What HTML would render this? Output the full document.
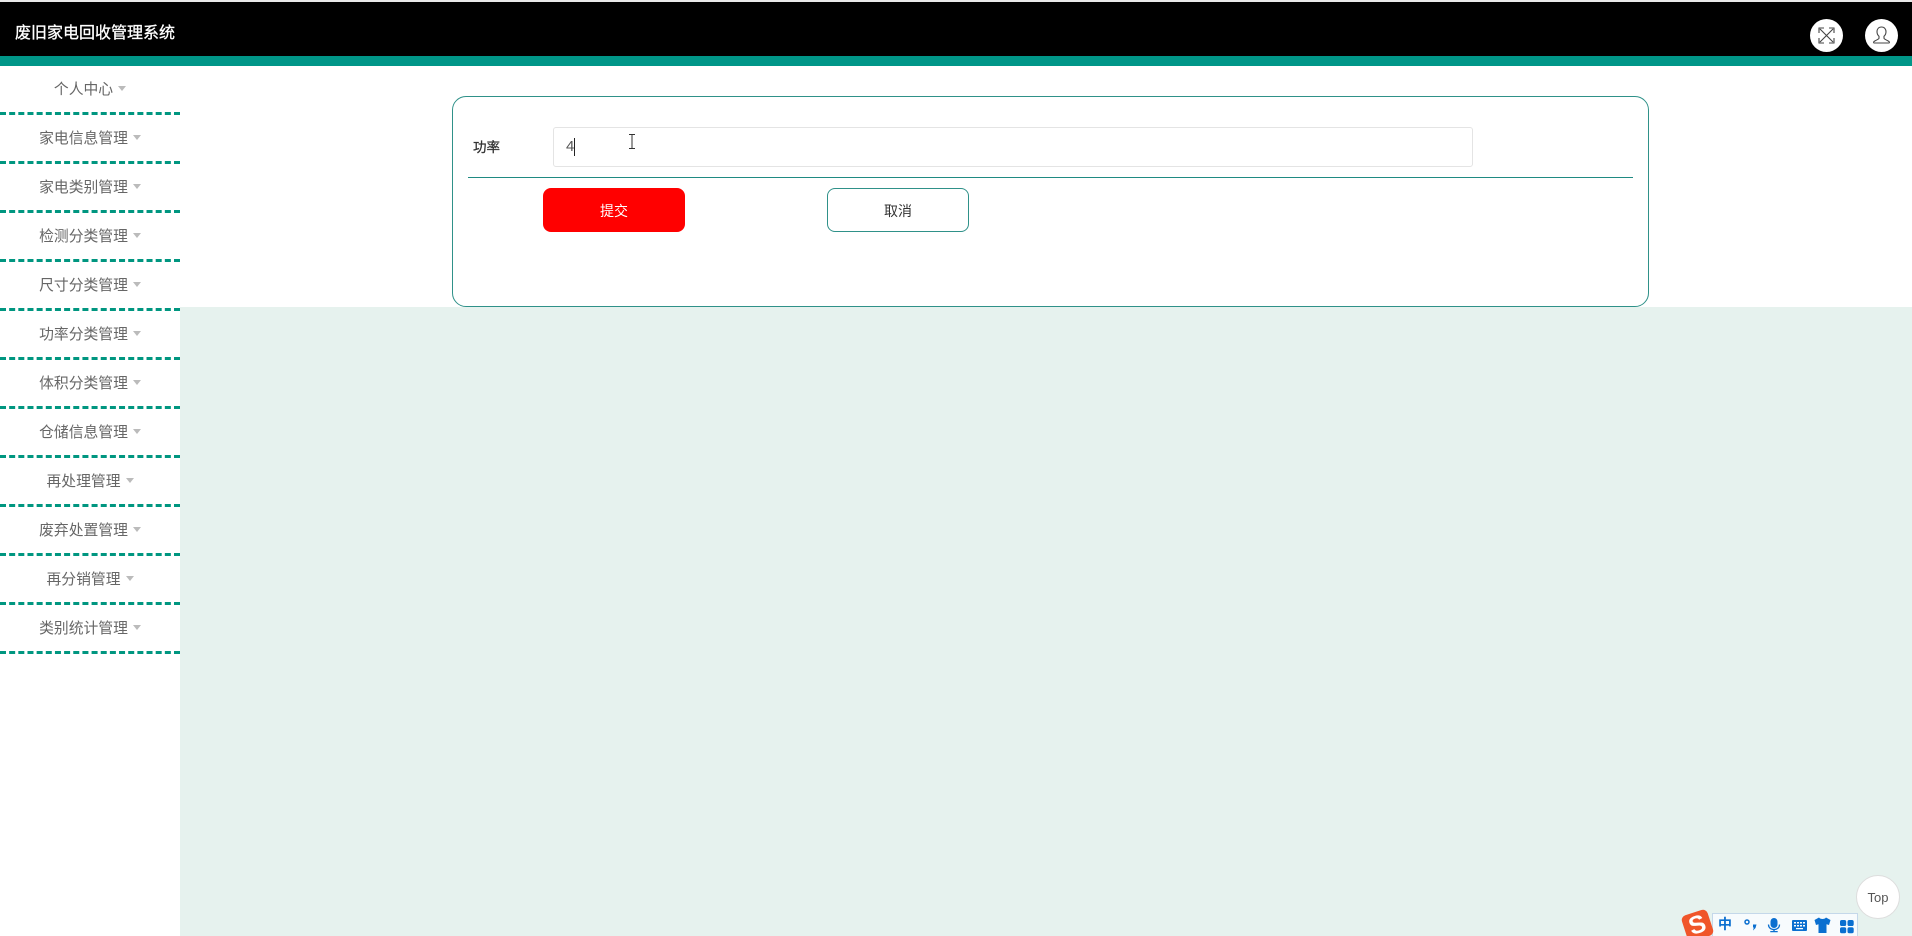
<!DOCTYPE html>
<html lang="zh-CN">
<head>
<meta charset="utf-8">
<title>废旧家电回收管理系统</title>
<style>
*{box-sizing:border-box;margin:0;padding:0}
html,body{width:1912px;height:936px;overflow:hidden;background:#e6f2ee;font-family:"Liberation Sans","Noto Sans CJK SC",sans-serif}
#wrap{position:relative;width:1912px;height:936px;overflow:hidden;background:#e6f2ee}
.a{position:absolute}
#strip{left:0;top:0;width:1912px;height:2px;background:#e8e8e8}
#hdr{left:0;top:2px;width:1912px;height:54px;background:#000}
#teal{left:0;top:56px;width:1912px;height:10px;background:#009688}
#title{left:15px;top:22px;line-height:24px;font-size:16px;color:#fff;white-space:nowrap;-webkit-text-stroke:.3px #fff}
.circ{width:33px;height:33px;border-radius:50%;background:#fff;top:19px}
#side{left:0;top:66px;width:180px;height:870px;background:#fff}
.mi{position:absolute;left:0;width:180px;height:49px;border-bottom:3px dashed #009680;text-align:center;color:#666;font-size:14.8px;line-height:48px;white-space:nowrap}
.mi i{display:inline-block;width:0;height:0;border-left:4.5px solid transparent;border-right:4.5px solid transparent;border-top:5px solid #bbb;margin-left:5px;vertical-align:3px}
#white{left:180px;top:66px;width:1732px;height:241px;background:#fff}
#card{left:452px;top:96px;width:1197px;height:211px;border:1.5px solid #2f9189;border-radius:14px;background:#fff}
#lab{left:473px;top:137px;font-size:13.5px;line-height:22px;color:#333;white-space:nowrap;-webkit-text-stroke:.3px #333}
#inp{left:553px;top:127px;width:920px;height:40px;border:1px solid #e4e4e4;border-radius:3px;background:#fff}
#val{left:566px;top:136px;font-size:15px;line-height:22px;color:#555}
#caret{left:574px;top:138px;width:1px;height:18px;background:#222}
#line{left:468px;top:177px;width:1165px;height:1px;background:#1f8a82}
#ok{left:543px;top:188px;width:142px;height:44px;background:#f00;border-radius:8px;color:#fff;font-size:14px;line-height:46px;text-align:center}
#no{left:827px;top:188px;width:142px;height:44px;background:#fff;border:1px solid #2f9189;border-radius:8px;color:#333;font-size:14px;line-height:44px;text-align:center}
#top{left:1856px;top:875px;width:44px;height:44px;border-radius:50%;background:#fff;border:1px solid #ddd;color:#555;font-size:13px;line-height:43px;text-align:center}
#sg{left:1712px;top:913px;width:146px;height:23px;background:#f7fbfd;border:1px solid #c4d8ea;border-bottom:none}
#logo{left:1684px;top:912px;width:27px;height:27px;background:#f0562a;border-radius:5px;transform:rotate(-18deg);color:#fff;font-size:25px;font-weight:bold;line-height:27px;text-align:center;overflow:hidden}
.sgt{color:#0a6fd0;font-weight:bold;font-size:14px;line-height:20px;white-space:nowrap}
</style>
</head>
<body>
<div id="wrap">
<div class="a" id="strip"></div>
<div class="a" id="hdr"></div>
<div class="a" id="teal"></div>
<div class="a" id="title">废旧家电回收管理系统</div>

<div class="a circ" style="left:1810px">
<svg width="33" height="33" viewBox="0 0 33 33" fill="none" stroke="#444" stroke-width="1.100">
<path d="M10 10L23 23M23 10L10 23"/>
<path d="M9 14V9h5M19 9h5v5M24 19v5h-5M14 24H9v-5"/>
</svg>
</div>
<div class="a circ" style="left:1865px">
<svg width="33" height="33" viewBox="0 0 33 33" fill="none" stroke="#444" stroke-width="1.100">
<path d="M16.500 8c-3 0-4.500 2.200-4.500 4.800 0 2 .8 3.500 2 4.500v2c0 1-3 1.700-5 3.200-.7.600-.5 1.500.4 1.500h14.200c.9 0 1.100-.9.400-1.500-2-1.500-5-2.200-5-3.200v-2c1.200-1 2-2.500 2-4.500C21 10.200 19.500 8 16.500 8z"/>
</svg>
</div>

<div class="a" id="side">
<div class="mi" style="top:0">个人中心<i></i></div>
<div class="mi" style="top:49px">家电信息管理<i></i></div>
<div class="mi" style="top:98px">家电类别管理<i></i></div>
<div class="mi" style="top:147px">检测分类管理<i></i></div>
<div class="mi" style="top:196px">尺寸分类管理<i></i></div>
<div class="mi" style="top:245px">功率分类管理<i></i></div>
<div class="mi" style="top:294px">体积分类管理<i></i></div>
<div class="mi" style="top:343px">仓储信息管理<i></i></div>
<div class="mi" style="top:392px">再处理管理<i></i></div>
<div class="mi" style="top:441px">废弃处置管理<i></i></div>
<div class="mi" style="top:490px">再分销管理<i></i></div>
<div class="mi" style="top:539px">类别统计管理<i></i></div>
</div>

<div class="a" id="white"></div>
<div class="a" id="card"></div>
<div class="a" id="lab">功率</div>
<div class="a" id="inp"></div>
<div class="a" id="val">4</div>
<div class="a" id="caret"></div>
<svg class="a" style="left:625px;top:133px" width="14" height="18" viewBox="0 0 14 18" fill="none" stroke="#333" stroke-width="1">
<path d="M4 1.500h6M7 1.500v14M4 15.500h6"/>
</svg>
<div class="a" id="line"></div>
<div class="a" id="ok">提交</div>
<div class="a" id="no">取消</div>

<div class="a" id="top">Top</div>

<div class="a" id="sg"></div>
<div class="a" id="logo">S</div>
<div class="a sgt" style="left:1718px;top:914px">中</div>
<svg class="a" style="left:1740px;top:915px" width="116" height="21" viewBox="0 0 116 21" fill="#0a6fd0">
<circle cx="7" cy="7" r="2" fill="none" stroke="#0a6fd0" stroke-width="1.500"/>
<path d="M13 9.500h3.500l-1 3.500-2.500 2.500 .8-3H13z"/>
<rect x="30.500" y="3" width="7" height="10" rx="3.500"/>
<path d="M28.500 9.500c0 3.300 2.500 5 5.500 5s5.500-1.700 5.500-5" fill="none" stroke="#0a6fd0" stroke-width="1.300"/>
<path d="M33.300 14h1.400v2h3v1.300h-7.400V16h3z"/>
<path fill-rule="evenodd" d="M53 5h13a1 1 0 0 1 1 1v9a1 1 0 0 1-1 1H53a1 1 0 0 1-1-1V6a1 1 0 0 1 1-1zm1 2v1.500h2V7zm3 0v1.500h2V7zm3 0v1.500h2V7zm3 0v1.500h2V7zM54 10v1.500h2V10zm3 0v1.500h2V10zm3 0v1.500h2V10zm3 0v1.500h2V10zM56 13v1.200h7V13z"/>
<path d="M74.500 5l4.500-2.500c.8 1.200 2.700 1.500 3.500 1.500S85.200 3.700 86 2.500L90.500 5l-1.500 5-2.500-.8V18H78.500V9.200L76 10z"/>
<rect x="100" y="5" width="6.200" height="6" rx="1.800"/>
<rect x="107.500" y="5" width="6.200" height="6" rx="1.800"/>
<rect x="100" y="12.300" width="6.200" height="6" rx="1.800"/>
<rect x="107.500" y="12.300" width="6.200" height="6" rx="1.800"/>
</svg>
</div>
</body>
</html>
